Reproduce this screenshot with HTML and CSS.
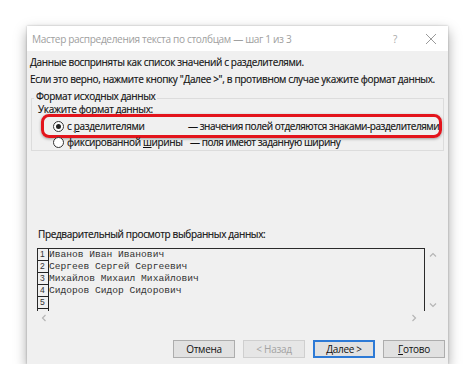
FILE: index.html
```html
<!DOCTYPE html>
<html lang="ru">
<head>
<meta charset="utf-8">
<link rel="stylesheet" href="styles.css">
</head>
<body>
<div class="dialog">
  <div class="titlebar">
    <span class="title">Мастер распределения текста по столбцам — шаг 1 из 3</span>
    <span class="tb-help">?</span>
    <svg class="tb-close" width="12" height="12" viewBox="0 0 12 12"><path d="M1 1L11 11M11 1L1 11" stroke="#9a9a9a" stroke-width="1" fill="none"/></svg>
  </div>
  <div class="content">
    <p class="line l1">Данные восприняты как список значений с разделителями.</p>
    <p class="line l2">Если это верно, нажмите кнопку "Далее &gt;", в противном случае укажите формат данных.</p>
    <div class="group">
      <span class="legend">Формат исходных данных</span>
      <div class="sub">Укажите формат данных:</div>
      <div class="opt opt1">
        <span class="radio checked"></span>
        <span class="opt-name">с <u>р</u>азделителями</span>
        <span class="opt-desc">— значения полей отделяются знаками-разделителями</span>
        <span class="highlight"></span>
      </div>
      <div class="opt opt2">
        <span class="radio"></span>
        <span class="opt-name">фиксированной <u>ш</u>ирины</span>
        <span class="opt-desc">— поля имеют заданную ширину</span>
      </div>
    </div>
    <div class="preview-label">Предварительный просмотр выбранных данных:</div>
    <div class="preview">
      <div class="preview-main">
        <div class="grid">
          <div class="row"><span class="num">1</span><span class="val">Иванов Иван Иванович</span></div>
          <div class="row"><span class="num">2</span><span class="val">Сергеев Сергей Сергеевич</span></div>
          <div class="row"><span class="num">3</span><span class="val">Михайлов Михаил Михайлович</span></div>
          <div class="row"><span class="num">4</span><span class="val">Сидоров Сидор Сидорович</span></div>
          <div class="row"><span class="num">5</span><span class="val"></span></div>
          <div class="row"><span class="num"></span><span class="val"></span></div>
        </div>
        <div class="hscroll">
          <svg width="6" height="8" viewBox="0 0 6 8"><path d="M4.5 1L1.5 4L4.5 7" stroke="#b5b5b5" stroke-width="1.2" fill="none"/></svg>
          <svg width="6" height="8" viewBox="0 0 6 8"><path d="M1.5 1L4.5 4L1.5 7" stroke="#b5b5b5" stroke-width="1.2" fill="none"/></svg>
        </div>
      </div>
      <div class="vscroll">
        <svg width="8" height="6" viewBox="0 0 8 6"><path d="M1 4.5L4 1.5L7 4.5" stroke="#b5b5b5" stroke-width="1.2" fill="none"/></svg>
        <svg width="8" height="6" viewBox="0 0 8 6"><path d="M1 1.5L4 4.5L7 1.5" stroke="#b5b5b5" stroke-width="1.2" fill="none"/></svg>
      </div>
    </div>
    <div class="buttons">
      <button class="btn">Отмена</button>
      <button class="btn disabled">&lt; Назад</button>
      <button class="btn default"><u>Д</u>алее &gt;</button>
      <button class="btn"><u>Г</u>отово</button>
    </div>
  </div>
</div>
</body>
</html>
```
FILE: styles.css
```css
html, body {
  margin: 0;
  padding: 0;
  background: #ffffff;
}
body {
  font-family: "Open Sans", "Noto Sans", sans-serif;
  font-size: 10px;
  letter-spacing: -0.35px;
  color: #111;
  padding: 26px 0 0 27px;
}
.dialog {
  width: 421px;
  height: 338px;
  background: #f0f0f0;
  box-shadow: 0 5px 12px rgba(0,0,0,0.35), 0 0 2px rgba(0,0,0,0.25);
  display: flex;
  flex-direction: column;
}
.titlebar {
  height: 25px;
  background: #ffffff;
  display: flex;
  align-items: center;
  padding: 0 0 0 5px;
  flex: none;
}
.title {
  color: #a0a0a0;
  font-size: 10.1px;
  flex: 1;
}
.tb-help {
  color: #a8a8a8;
  font-size: 10px;
  margin-right: 28px;
}
.tb-close {
  margin-right: 11px;
}
.content {
  flex: 1;
  display: flex;
  flex-direction: column;
  padding: 0 4px 0 3px;
  position: relative;
}
.line {
  margin: 0;
  font-size: 10px;
  line-height: 17px;
  color: #111;
  white-space: nowrap;
  -webkit-text-stroke: 0.15px #111;
}
.l1 { margin-top: 3px; }
.group {
  margin: 10px 0 0 1px;
  border: 1px solid #dcdcdc;
  height: 53px;
  position: relative;
  width: 413px;
  box-sizing: border-box;
  -webkit-text-stroke: 0.15px #111;
}
.legend {
  position: absolute;
  top: -10px;
  left: 2px;
  background: #f0f0f0;
  padding: 0 2px;
  line-height: 14px;
  color: #111;
}
.sub {
  margin: 4px 0 0 6px;
  line-height: 13px;
  color: #111;
}
.opt {
  display: flex;
  align-items: center;
  height: 16px;
  position: relative;
  padding-left: 21px;
}
.opt1 { margin-top: 2px; }
.radio {
  width: 9px;
  height: 9px;
  border: 1px solid #333;
  border-radius: 50%;
  box-sizing: content-box;
  position: relative;
  flex: none;
  background: #fff;
}
.radio.checked::after {
  content: "";
  position: absolute;
  left: 2px;
  top: 2px;
  width: 5px;
  height: 5px;
  border-radius: 50%;
  background: #222;
}
.opt-name {
  margin-left: 3px;
  width: 121px;
  flex: none;
  white-space: nowrap;
}
.opt2 .opt-name { width: 123px; }
.opt-desc {
  white-space: nowrap;
  letter-spacing: -0.45px;
}
.highlight {
  position: absolute;
  left: 9px;
  right: 1px;
  top: -4px;
  bottom: -4px;
  border: 3px solid #e3141c;
  border-radius: 8px;
  box-shadow: 0 1px 3px rgba(0,0,0,0.35);
  pointer-events: none;
}
.preview-label {
  margin: 76px 0 0 8px;
  line-height: 14px;
  color: #111;
  -webkit-text-stroke: 0.15px #111;
}
.preview {
  display: flex;
  margin: 7px 0 0 7px;
  height: 77px;
}
.preview-main {
  width: 388px;
  display: flex;
  flex-direction: column;
}
.grid {
  height: 63px;
  border: 1px solid #2a2a2a;
  border-bottom: none;
  overflow: hidden;
  box-sizing: border-box;
  background: #f0f0f0;
}
.row {
  display: flex;
  height: 12px;
}
.num {
  width: 11px;
  border-right: 1px solid #222;
  border-bottom: 1px solid #222;
  box-sizing: border-box;
  font-family: "Liberation Sans", sans-serif;
  font-size: 8.5px;
  letter-spacing: 0;
  line-height: 11px;
  padding-left: 2px;
  color: #333;
  flex: none;
}
.val {
  font-family: "Liberation Mono", monospace;
  font-size: 9.6px;
  letter-spacing: 0;
  line-height: 12px;
  color: #333;
  white-space: pre;
}
.hscroll {
  height: 14px;
  display: flex;
  justify-content: space-between;
  align-items: center;
  padding: 0 8px 0 4px;
  background: #f0f0f0;
}
.vscroll {
  width: 16px;
  height: 63px;
  display: flex;
  flex-direction: column;
  justify-content: space-between;
  align-items: center;
  padding: 4px 0 3px 0;
  box-sizing: border-box;
}
.buttons {
  display: flex;
  justify-content: flex-end;
  gap: 8px;
  margin-top: auto;
  margin-bottom: 6px;
  margin-right: -1px;
}
.btn {
  width: 62px;
  height: 18px;
  background: #e1e1e1;
  border: 1px solid #adadad;
  font-family: "Open Sans", "Noto Sans", sans-serif;
  font-size: 10px;
  letter-spacing: -0.3px;
  color: #111;
  padding: 0;
  line-height: 16px;
}
.btn.disabled {
  color: #a3a3a3;
  border-color: #cfcfcf;
  background: #e6e6e6;
}
.btn.default {
  border: 2px solid #2d7ad6;
  line-height: 14px;
}
```
